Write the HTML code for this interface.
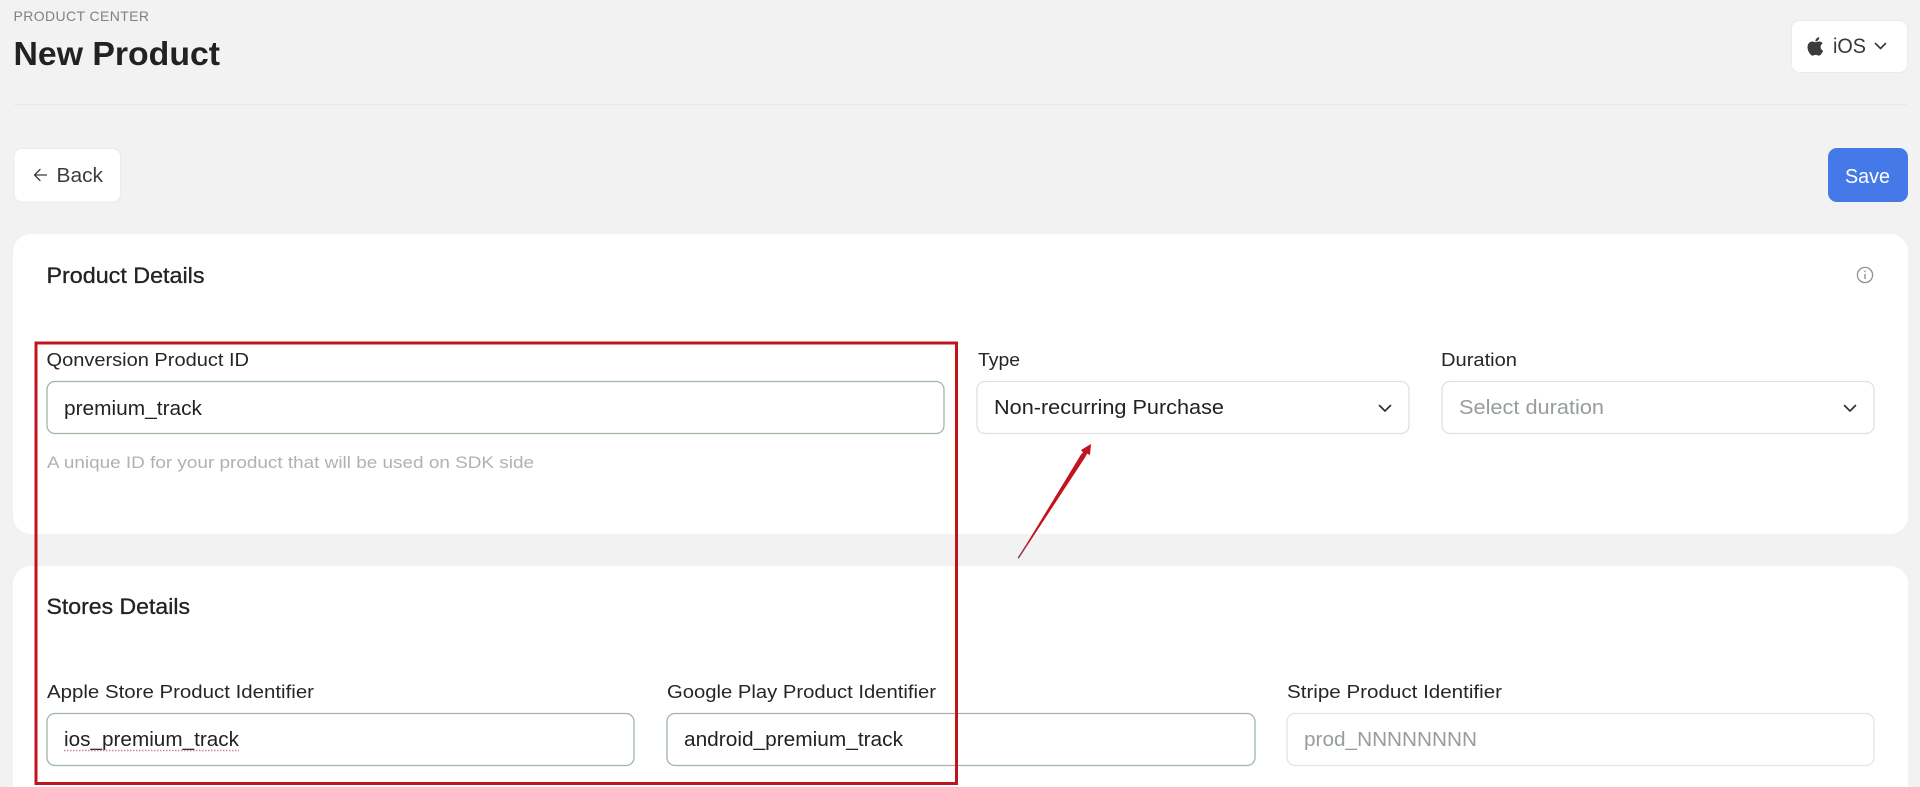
<!DOCTYPE html>
<html lang="en">
<head>
<meta charset="utf-8">
<title>New Product</title>
<style>
html,body{margin:0;padding:0;width:1920px;height:787px;overflow:hidden;background:#f2f2f2}
svg{display:block;filter:blur(.3px)}
text{font-family:"Liberation Sans",Arial,sans-serif;font-size:18px;fill:#222}
.lbl{font-size:18px;fill:#262626}
.val{font-size:20px;fill:#222}
.ph{font-size:20px;fill:#969d9a}
.ttl{font-size:22px;fill:#222;stroke:#222;stroke-width:.3px}
</style>
</head>
<body>
<svg xmlns="http://www.w3.org/2000/svg" width="1920" height="787" viewBox="0 0 1920 787">
  <rect width="1920" height="787" fill="#f2f2f2"/>

  <!-- header -->
  <text x="13.5" y="21" textLength="135.5" lengthAdjust="spacing" style="font-size:14px;fill:#7e8381">PRODUCT CENTER</text>
  <text x="13.5" y="65" textLength="206.5" lengthAdjust="spacingAndGlyphs" style="font-size:33.5px;font-weight:700;fill:#222">New Product</text>
  <rect x="14" y="104" width="1893" height="1.2" fill="#e9e9e9"/>

  <!-- platform button -->
  <rect x="1791.5" y="20.5" width="116" height="52" rx="8" fill="#fff" stroke="#ebebeb"/>
  <path transform="translate(1803 34) scale(1.03)" fill="#3a3d3d" d="M17.05 20.28c-.98.95-2.05.8-3.08.35-1.09-.46-2.09-.48-3.24 0-1.44.62-2.2.44-3.06-.35C2.79 15.25 3.51 7.59 9.05 7.31c1.35.07 2.29.74 3.08.8 1.18-.24 2.31-.93 3.57-.84 1.51.12 2.65.72 3.4 1.8-3.12 1.87-2.38 5.98.48 7.13-.57 1.5-1.31 2.99-2.54 4.09zM12.03 7.25c-.15-2.23 1.66-4.07 3.74-4.25.29 2.58-2.34 4.5-3.74 4.25z"/>
  <text x="1833" y="53" textLength="33" lengthAdjust="spacingAndGlyphs" style="font-size:21px;fill:#363939">iOS</text>
  <path d="M1875.5 43.5l5 5 5-5" fill="none" stroke="#363939" stroke-width="1.6" stroke-linecap="round" stroke-linejoin="round"/>

  <!-- back button -->
  <rect x="14" y="148.5" width="106.5" height="53.5" rx="8" fill="#fff" stroke="#ebebeb"/>
  <path d="M46.5 175H34.5M40 169.5l-5.5 5.5 5.5 5.5" fill="none" stroke="#3c3c3c" stroke-width="1.3" stroke-linecap="round" stroke-linejoin="round"/>
  <text x="56.5" y="182" textLength="46.5" lengthAdjust="spacingAndGlyphs" style="font-size:20.5px;fill:#3c3c3c">Back</text>

  <!-- save button -->
  <rect x="1828" y="148" width="80" height="54" rx="9" fill="#4679e8"/>
  <text x="1845" y="183" textLength="45" lengthAdjust="spacingAndGlyphs" style="font-size:20.5px;fill:#fff">Save</text>

  <!-- card 1 -->
  <rect x="13" y="234" width="1895" height="300" rx="18" fill="#fff"/>
  <text class="ttl" x="46.5" y="283" textLength="158" lengthAdjust="spacingAndGlyphs">Product Details</text>
  <circle cx="1865" cy="275" r="7.6" fill="none" stroke="#8f9291" stroke-width="1.3"/>
  <rect x="1864.3" y="274" width="1.4" height="5" fill="#8f9291"/>
  <rect x="1864.3" y="270.6" width="1.4" height="1.6" fill="#8f9291"/>

  <text class="lbl" x="46.5" y="366" textLength="202.5" lengthAdjust="spacingAndGlyphs">Qonversion Product ID</text>
  <rect x="47" y="381.5" width="897" height="52" rx="8" fill="#fff" stroke="#9fb79f" stroke-width="1.3"/>
  <text class="val" x="64" y="415" textLength="138" lengthAdjust="spacingAndGlyphs">premium_track</text>
  <text x="47" y="468" textLength="487" lengthAdjust="spacingAndGlyphs" style="font-size:17px;fill:#aeb3b1">A unique ID for your product that will be used on SDK side</text>

  <text class="lbl" x="978" y="366" textLength="42" lengthAdjust="spacingAndGlyphs">Type</text>
  <rect x="977" y="381.5" width="432" height="52" rx="8" fill="#fff" stroke="#dde2e1" stroke-width="1.3"/>
  <text class="val" x="994" y="414" textLength="230" lengthAdjust="spacingAndGlyphs">Non-recurring Purchase</text>
  <path d="M1379.5 405.5l5.5 5.5 5.5-5.5" fill="none" stroke="#2e2e2e" stroke-width="1.6" stroke-linecap="round" stroke-linejoin="round"/>

  <text class="lbl" x="1441" y="366" textLength="76" lengthAdjust="spacingAndGlyphs">Duration</text>
  <rect x="1442" y="381.5" width="432" height="52" rx="8" fill="#fff" stroke="#dde2e1" stroke-width="1.3"/>
  <text class="ph" x="1459" y="414" textLength="145" lengthAdjust="spacingAndGlyphs">Select duration</text>
  <path d="M1844.5 405.5l5.5 5.5 5.5-5.5" fill="none" stroke="#2e2e2e" stroke-width="1.6" stroke-linecap="round" stroke-linejoin="round"/>

  <!-- card 2 -->
  <rect x="13" y="566" width="1895" height="260" rx="18" fill="#fff"/>
  <text class="ttl" x="46.5" y="614" textLength="143.5" lengthAdjust="spacingAndGlyphs">Stores Details</text>

  <text class="lbl" x="47" y="698" textLength="267" lengthAdjust="spacingAndGlyphs">Apple Store Product Identifier</text>
  <rect x="47" y="713.5" width="587" height="52" rx="8" fill="#fff" stroke="#9fb79f" stroke-width="1.3"/>
  <text class="val" x="64" y="746" textLength="175" lengthAdjust="spacingAndGlyphs">ios_premium_track</text>
  <path d="M64 750.5H239" fill="none" stroke="#c08d94" stroke-width="1.4" stroke-dasharray="1.5 1.5"/>

  <text class="lbl" x="667" y="698" textLength="269" lengthAdjust="spacingAndGlyphs">Google Play Product Identifier</text>
  <rect x="667" y="713.5" width="588" height="52" rx="8" fill="#fff" stroke="#9fb79f" stroke-width="1.3"/>
  <text class="val" x="684" y="746" textLength="219" lengthAdjust="spacingAndGlyphs">android_premium_track</text>

  <text class="lbl" x="1287" y="698" textLength="215" lengthAdjust="spacingAndGlyphs">Stripe Product Identifier</text>
  <rect x="1287" y="713.5" width="587" height="52" rx="8" fill="#fff" stroke="#e2e5e4" stroke-width="1.3"/>
  <text class="ph" x="1304" y="746" textLength="173" lengthAdjust="spacingAndGlyphs">prod_NNNNNNNN</text>

  <!-- annotations -->
  <rect x="36" y="343" width="920.5" height="440.5" fill="none" stroke="#c1141c" stroke-width="3"/>
  <polygon points="1018,558 1080.9,454.6 1083,452.4 1081,450 1091,444 1090,455 1087,453.6 1085.1,457.4 1018.8,558.5" fill="#c1141c"/>
  <path d="M1018 558l8-12.5" stroke="#6b5558" stroke-width="1" fill="none"/>
</svg>
</body>
</html>
